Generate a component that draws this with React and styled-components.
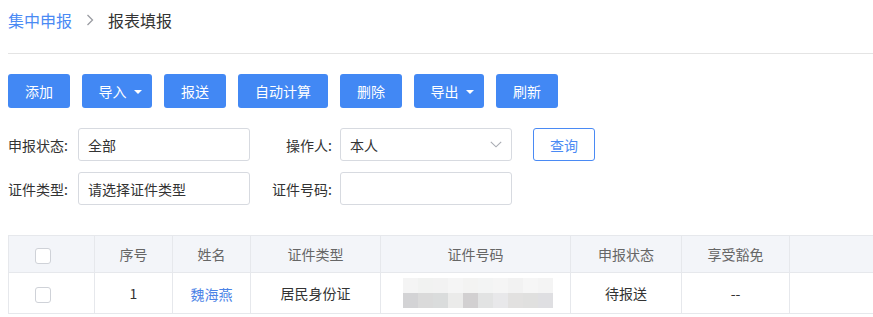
import React from "react";
import styled, { createGlobalStyle } from "styled-components";

const GlobalStyle = createGlobalStyle`
  html, body {
    margin: 0;
    padding: 0;
    background: #fff;
    overflow: hidden;
  }
  body {
    font-family: "Noto Sans CJK SC", "Noto Sans", "Liberation Sans", sans-serif;
    color: #333;
  }
`;

const Page = styled.div`
  width: 900px;
  padding: 8px 0 0 8px;
`;

const Breadcrumb = styled.div`
  display: flex;
  align-items: center;
  height: 24px;
  font-size: 16px;
  line-height: 24px;
  padding-bottom: 21px;
  border-bottom: 1px solid #e4e4e4;
`;

const Crumb = styled.span`
  color: ${(p) => (p.$link ? "#4a8af4" : "#333")};
`;

const Sep = styled.span`
  display: flex;
  align-items: center;
  margin: 0 14px;
`;

const Toolbar = styled.div`
  display: flex;
  gap: 12px;
  margin-top: 20px;
`;

const Button = styled.button`
  display: flex;
  align-items: center;
  justify-content: center;
  gap: 7px;
  height: 34px;
  width: ${(p) => p.$w}px;
  padding: ${(p) => (p.$caret ? "0 0 0 6px" : "0")};
  border: none;
  border-radius: 3px;
  background: #4288f4;
  color: #fff;
  font-family: inherit;
  font-size: 14px;
`;

const Caret = styled.span`
  width: 0;
  height: 0;
  border-left: 4px solid transparent;
  border-right: 4px solid transparent;
  border-top: 4px solid #fff;
  margin-top: 1px;
`;

const Form = styled.div`
  display: grid;
  grid-template-columns: 70px 172px 90px 172px auto;
  grid-template-rows: 33px 33px;
  row-gap: 11px;
  align-items: center;
  margin-top: 20px;
  font-size: 14px;
`;

const Label = styled.label`
  color: #333;
  text-align: ${(p) => (p.$right ? "right" : "left")};
  padding-right: ${(p) => (p.$right ? "8px" : "0")};
  white-space: nowrap;
`;

const Field = styled.div`
  position: relative;
  display: flex;
  align-items: center;
  box-sizing: border-box;
  height: 33px;
  width: 172px;
  padding: 0 9px;
  border: 1px solid #d7dae0;
  border-radius: 3px;
  color: #333;
  background: #fff;
`;

const Chevron = styled.svg`
  position: absolute;
  right: 9px;
  top: 12px;
`;

const QueryButton = styled.button`
  height: 33px;
  width: 62px;
  margin-left: 21px;
  border: 1px solid #4a8af4;
  border-radius: 3px;
  background: #fff;
  color: #4a8af4;
  font-family: inherit;
  font-size: 14px;
`;

const Table = styled.table`
  margin-top: 30px;
  border-collapse: collapse;
  table-layout: fixed;
  width: 892px;
  font-size: 14px;
`;

const Th = styled.th`
  height: 36px;
  padding: 0;
  background: #f3f5f9;
  border: 1px solid #e6e8ec;
  color: #666;
  font-weight: normal;
  text-align: ${(p) => (p.$left ? "left" : "center")};
  padding-left: ${(p) => (p.$left ? "26px" : "0")};
`;

const Td = styled.td`
  height: 40px;
  padding: 0;
  border: 1px solid #e6e8ec;
  color: #333;
  text-align: ${(p) => (p.$left ? "left" : "center")};
  padding-left: ${(p) => (p.$left ? "26px" : "0")};
`;

const Checkbox = styled.span`
  display: inline-block;
  vertical-align: middle;
  box-sizing: border-box;
  width: 16px;
  height: 16px;
  border: 1px solid #cfd2d8;
  border-radius: 3px;
  background: #fff;
`;

const NameLink = styled.a`
  color: #4a82e6;
  text-decoration: none;
  position: relative;
  top: 1px;
`;

const Mosaic = styled.div`
  display: grid;
  grid-template-columns: repeat(10, 15px);
  grid-auto-rows: 15px;
  margin: 0 0 0 22px;
  width: 150px;
`;

const Tile = styled.span`
  background: ${(p) => p.$c};
`;

const mosaicTop = ["#f4f4f4", "#f1f2f1", "#f2f2f2", "#f5f5f5", "#f3f3f2", "#f3f4f4", "#f5f5f5", "#f2f2f2", "#f6f6f6", "#f4f4f4"];
const mosaicBottom = ["#d3d3d5", "#dadada", "#dadcdc", "#ebebea", "#d2d0d1", "#e2e3e3", "#e8e8ea", "#e2e1e0", "#e0e0df", "#dfdfe2"];

const buttons = [
  { text: "添加", w: 62 },
  { text: "导入", w: 70, caret: true },
  { text: "报送", w: 62 },
  { text: "自动计算", w: 90 },
  { text: "删除", w: 62 },
  { text: "导出", w: 70, caret: true },
  { text: "刷新", w: 62 },
];

const cols = [86, 78, 78, 130, 190, 111, 108, 111];

export default function App() {
  return (
    <Page>
      <GlobalStyle />
      <Breadcrumb>
        <Crumb $link>集中申报</Crumb>
        <Sep>
          <svg width="8" height="12" viewBox="0 0 8 12">
            <path d="M1.5 1 L6.5 6 L1.5 11" fill="none" stroke="#9a9ca2" strokeWidth="1.3" />
          </svg>
        </Sep>
        <Crumb>报表填报</Crumb>
      </Breadcrumb>

      <Toolbar>
        {buttons.map((b) => (
          <Button key={b.text} $w={b.w} $caret={b.caret}>
            {b.text}
            {b.caret && <Caret />}
          </Button>
        ))}
      </Toolbar>

      <Form>
        <Label>申报状态:</Label>
        <Field>全部</Field>
        <Label $right>操作人:</Label>
        <Field>
          本人
          <Chevron width="12" height="7" viewBox="0 0 12 7">
            <path d="M0.8 0.8 L6 5.8 L11.2 0.8" fill="none" stroke="#a8abb2" strokeWidth="1.1" />
          </Chevron>
        </Field>
        <QueryButton>查询</QueryButton>
        <Label>证件类型:</Label>
        <Field>请选择证件类型</Field>
        <Label $right>证件号码:</Label>
        <Field />
        <span />
      </Form>

      <Table>
        <colgroup>
          {cols.map((w, i) => (
            <col key={i} style={{ width: w }} />
          ))}
        </colgroup>
        <thead>
          <tr>
            <Th $left><Checkbox /></Th>
            <Th>序号</Th>
            <Th>姓名</Th>
            <Th>证件类型</Th>
            <Th>证件号码</Th>
            <Th>申报状态</Th>
            <Th>享受豁免</Th>
            <Th />
          </tr>
        </thead>
        <tbody>
          <tr>
            <Td $left><Checkbox /></Td>
            <Td>1</Td>
            <Td><NameLink>魏海燕</NameLink></Td>
            <Td>居民身份证</Td>
            <Td>
              <Mosaic>
                {mosaicTop.map((c, i) => <Tile key={"t" + i} $c={c} />)}
                {mosaicBottom.map((c, i) => <Tile key={"b" + i} $c={c} />)}
              </Mosaic>
            </Td>
            <Td>待报送</Td>
            <Td>--</Td>
            <Td />
          </tr>
        </tbody>
      </Table>
    </Page>
  );
}
